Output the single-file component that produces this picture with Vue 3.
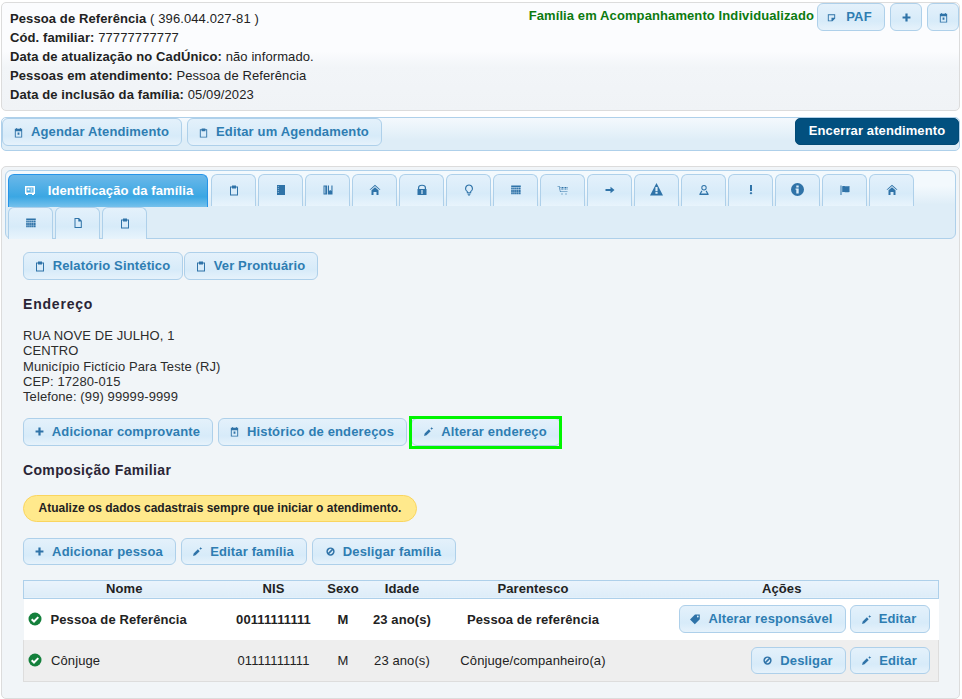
<script setup>
import { h } from 'vue'

let gridCells = 'M1.2 1.4h9.6v1.6H1.200z'
for (let r = 0; r < 3; r++) {
  for (let c = 0; c < 5; c++) {
    gridCells += ` M${(1.2 + c * 1.95).toFixed(2)} ${(3.5 + r * 2.4).toFixed(2)}h1.6v2h-1.6z`
  }
}

const icons = {
  clipboard: 'M2 2.5h2v-1h4v1h2v9H2z M3 3.5v7h6v-7H8v1H4v-1z',
  calendar: 'M2 2h1.5V1h1v1h3V1h1v1H10v9.5H2z M3 4.5v6h6v-6z M5 6h2v2.5H5z',
  plus: 'M4.8 1.700h2.400v3.100h3.100v2.400H7.200v3.100H4.800V7.200H1.700V4.800h3.100z',
  pencil: 'M1.200 10.800l.6-2.600 4.600-4.600 2 2-4.600 4.600z M9.500 1l.5 1.200 1.200.5-1.200.5-.5 1.200-.5-1.200-1.200-.5 1.200-.5z',
  ban: 'M6 1.500a4.500 4.500 0 1 1 0 9a4.500 4.500 0 1 1 0-9z M7.400 3.400A3 3 0 0 0 3.400 7.400z M8.600 4.600L4.600 8.600A3 3 0 0 0 8.600 4.600z',
  tag: 'M1 6.500L6 1.500h4.800v4.800l-5 5z M8.800 2.600a.9.9 0 1 0 0 1.800a.9.9 0 1 0 0-1.800z',
  note: 'M2 2.500h8v4.700l-3 3H2z M3 3.500v5.700h3V6.200h3V3.500z',
  card: 'M1 2h10v8h-1v1H8v-1H4v1H2v-1H1z M2.500 3.500v5h7v-5z M3.500 4.500h2v2h-2z M6.500 4.500h2v1h-2z M6.500 6.500h2v1h-2z',
  notebook: 'M2 1h8v10H2z M2.800 2v.8h.8V2z M2.800 4v.8h.8V4z M2.800 6v.8h.8V6z M2.800 8v.8h.8V8z',
  book: 'M1.500 1.500h3.700v9H1.500z M6 1.500h4.500v9H6z M7 1.500v5.500l1.200-1 1.200 1V1.500z M2.500 2.500v7h.8v-7z',
  home: 'M6 .8l5.500 5h-1.200L6 2 1.700 5.800H.5z M6 3.200l3.500 3.100v4.700h-2V8h-3v3h-2V6.300z',
  bag: 'M2 5V3.800a4 3 0 0 1 8 0V5h.5v6h-9V5z M3.200 5h5.600V3.800a2.800 2 0 0 0-5.600 0z M5.400 6v4h1.200V6z',
  bulb: 'M6 .5a4 4 0 0 1 2.200 7.300v1.400H3.800V7.800A4 4 0 0 1 6 .5z M6 1.500a3 3 0 0 0-1.200 5.700v1h2.400v-1A3 3 0 0 0 6 1.500z M4.500 9.700h3v.8h-3z M5 10.800h2v.7H5z',
  grid: gridCells,
  cart: 'M.5 2h2l1 5.500h7V8H3L2 2.600H.5z M3.500 3h1v1h-1z M5 3h1v1H5z M6.500 3h1v1h-1z M8 3h1v1H8z M9.500 3h1v1h-1z M3.700 4.500h1v1h-1z M5 4.500h1v1H5z M6.500 4.500h1v1h-1z M8 4.500h1v1H8z M9.500 4.500h1v1h-1z M4.500 9.500h1v1h-1z M8.500 9.500h1v1h-1z',
  arrow: 'M1.500 5h5V2.800L10.500 6l-4 3.200V7h-5z',
  warning: 'M6 0l6 11.500H0z M5 3.800v3.700h2V3.800z M5 8.300v1.700h2V8.300z',
  person: 'M6 1a2.700 2.700 0 1 1 0 5.400a2.700 2.700 0 1 1 0-5.400z M6 2a1.700 1.700 0 1 0 0 3.400a1.700 1.700 0 1 0 0-3.400z M3.400 6.600l1 .7L3 9.500h6L7.600 7.300l1-.7 2 3.400v1H1.400v-1z',
  bang: 'M5 1h2v6H5z M6 7.800l1.400 1.400L6 10.600 4.600 9.200z',
  info: 'M6 0a6 6 0 1 1 0 12a6 6 0 1 1 0-12z M4.900 2.200v1.900h2.200V2.200z M4.200 5.100v1.100h.7v3.600h2.200V5.100z',
  flag: 'M1.500 1.500h1v9.500h-1z M3.200 2.200c2-1 3.500.8 7.300-.2v6c-3.800 1-5.300-.8-7.300.2z',
  page: 'M2.500 1H7l2.800 2.800V11H2.500z M3.500 2v8h5.300V4.500H6.300V2z',
}

const Ico = (props) =>
  h('svg', { viewBox: '0 0 12 12', width: props.s || 11, height: props.s || 11 }, [
    h('path', { d: icons[props.n], 'fill-rule': 'evenodd', fill: 'currentColor' }),
  ])
Ico.props = ['n', 's']

const CheckIco = () =>
  h('svg', { viewBox: '0 0 14 14', width: 14, height: 14 }, [
    h('circle', { cx: 7, cy: 7, r: 6.5, fill: '#14803c' }),
    h('path', { d: 'M3.700 7.200l2.300 2.300 4.300-4.400', fill: 'none', stroke: '#fff', 'stroke-width': 2 }),
  ])

const tabs = ['clipboard','notebook','book','home','bag','bulb','grid','cart','arrow','warning','person','bang','info','flag','home','grid','page','clipboard']
const tabSize = { warning: 13, info: 13 }
</script>

<template>
  <div class="page">
    <section class="summary">
      <div class="info">
        <div><b>Pessoa de Referência</b> ( 396.044.027-81 )</div>
        <div><b>Cód. familiar:</b> 77777777777</div>
        <div><b>Data de atualização no CadÚnico:</b> não informado.</div>
        <div><b>Pessoas em atendimento:</b> Pessoa de Referência</div>
        <div><b>Data de inclusão da família:</b> 05/09/2023</div>
      </div>
      <div class="summary-actions">
        <b class="status">Família em Acompanhamento Individualizado</b>
        <button class="btn paf"><Ico n="note" /><span>PAF</span></button>
        <button class="btn square"><Ico n="plus" /></button>
        <button class="btn square"><Ico n="calendar" /></button>
      </div>
    </section>

    <section class="toolbar">
      <button class="btn agendar"><Ico n="calendar" /><span>Agendar Atendimento</span></button>
      <button class="btn editar-ag"><Ico n="clipboard" /><span>Editar um Agendamento</span></button>
      <button class="end">Encerrar atendimento</button>
    </section>

    <section class="panel">
      <nav class="tabbar">
        <a class="tab active"><Ico n="card" s="12" /><span>Identificação da família</span></a>
        <a v-for="(t, i) in tabs" :key="i" class="tab"><Ico :n="t" :s="tabSize[t] || 12" /></a>
      </nav>

      <div class="content">
        <div class="row tight">
          <button class="btn w160"><Ico n="clipboard" s="12" /><span>Relatório Sintético</span></button>
          <button class="btn w134"><Ico n="clipboard" s="12" /><span>Ver Prontuário</span></button>
        </div>

        <h2 class="h-end">Endereço</h2>
        <address>
          RUA NOVE DE JULHO, 1<br />
          CENTRO<br />
          Município Fictício Para Teste (RJ)<br />
          CEP: 17280-015<br />
          Telefone: (99) 99999-9999
        </address>

        <div class="row addr">
          <button class="btn w190"><Ico n="plus" /><span>Adicionar comprovante</span></button>
          <button class="btn w189"><Ico n="calendar" /><span>Histórico de endereços</span></button>
          <button class="btn w150 highlighted"><Ico n="pencil" /><span>Alterar endereço</span></button>
        </div>

        <h2 class="h-comp">Composição Familiar</h2>
        <p class="alert">Atualize os dados cadastrais sempre que iniciar o atendimento.</p>

        <div class="row fam">
          <button class="btn w153"><Ico n="plus" /><span>Adicionar pessoa</span></button>
          <button class="btn w126"><Ico n="pencil" /><span>Editar família</span></button>
          <button class="btn w144"><Ico n="ban" /><span>Desligar família</span></button>
        </div>

        <table>
          <colgroup>
            <col style="width: 201px" /><col style="width: 98px" /><col style="width: 41px" /><col style="width: 77px" /><col style="width: 185px" /><col />
          </colgroup>
          <thead>
            <tr><th>Nome</th><th>NIS</th><th>Sexo</th><th>Idade</th><th>Parentesco</th><th>Ações</th></tr>
          </thead>
          <tbody>
            <tr class="strong">
              <td class="name"><span class="name-in"><CheckIco /><span>Pessoa de Referência</span></span></td>
              <td>00111111111</td><td>M</td><td>23 ano(s)</td><td>Pessoa de referência</td>
              <td class="acts">
                <button class="btn w167"><Ico n="tag" s="12" /><span>Alterar responsável</span></button>
                <button class="btn w80"><Ico n="pencil" /><span>Editar</span></button>
              </td>
            </tr>
            <tr class="alt">
              <td class="name"><span class="name-in"><CheckIco /><span>Cônjuge</span></span></td>
              <td>01111111111</td><td>M</td><td>23 ano(s)</td><td>Cônjuge/companheiro(a)</td>
              <td class="acts">
                <button class="btn w95"><Ico n="ban" /><span>Desligar</span></button>
                <button class="btn w80"><Ico n="pencil" /><span>Editar</span></button>
              </td>
            </tr>
          </tbody>
        </table>
      </div>
    </section>
  </div>
</template>

<style>
html, body { margin: 0; background: #fff; }
</style>

<style scoped>
.page {
  width: 962px;
  height: 699px;
  box-sizing: border-box;
  padding: 2px 2px 0 1px;
  font: 13px/19px "Liberation Sans", Arial, sans-serif;
  color: #222;
  letter-spacing: .1px;
  overflow: hidden;
}
b, th { font-weight: 700; }
button { font-family: inherit; margin: 0; cursor: pointer; }

.summary {
  box-sizing: border-box;
  height: 109px;
  border: 1px solid #dcdcdc;
  border-radius: 5px;
  background: linear-gradient(#fbfcfe 0, #fbfcfe 45%, #f2f5f8 60%, #f0f3f6 100%);
  display: flex;
  justify-content: space-between;
  padding: 6px 0 0 8px;
}
.summary-actions { display: flex; align-items: flex-start; margin-top: -6px; }
.status { color: #0c7a10; margin-top: 3px; margin-right: 3px; letter-spacing: .1px; }

.btn {
  position: relative;
  box-sizing: border-box;
  height: 28px;
  display: inline-flex;
  align-items: center;
  justify-content: center;
  gap: 7px;
  padding: 0 2px 0 0;
  border: 1px solid #aed0ea;
  border-radius: 6px;
  background: linear-gradient(#e4f1fb 0, #d7ebf9 65%, #e6f2fb 100%);
  color: #2e7db2;
  font-size: 13px;
  font-weight: 700;
  letter-spacing: .15px;
  white-space: nowrap;
}
.btn span { padding-bottom: 2px; }
.addr .btn span, .fam .btn span, .alt .btn span { padding-bottom: 0; }
.btn svg { color: #2f73a8; flex: none; }

.paf { width: 68px; gap: 9px; padding-right: 4px; letter-spacing: .2px; }
.square { width: 32px; margin-left: 5px; padding: 0; }

.toolbar {
  box-sizing: border-box;
  height: 34px;
  margin-top: 6px;
  border: 1px solid #aed0ea;
  border-radius: 5px;
  background: linear-gradient(#f4f9fd 0, #deedf7 70%);
  display: flex;
  align-items: flex-start;
  gap: 5px;
}
.agendar { width: 180px; }
.editar-ag { width: 195px; }
.end {
  box-sizing: border-box;
  margin-left: auto;
  width: 164px;
  height: 27px;
  padding: 0 0 2px;
  border: 1px solid #024a75;
  border-radius: 5px;
  background: #02507f;
  color: #fff;
  font-size: 13px;
  font-weight: 700;
  letter-spacing: .1px;
}

.panel {
  box-sizing: border-box;
  height: 533px;
  margin-top: 15px;
  border: 1px solid #dcdcdc;
  border-radius: 5px;
  background: #f1f5f8;
  padding: 3px;
}
.tabbar {
  box-sizing: border-box;
  height: 69px;
  border: 1px solid #aed0ea;
  border-radius: 6px;
  background: linear-gradient(#f3f9fd 0, #f3f9fd 22%, #deedf7 50%);
  display: flex;
  flex-wrap: wrap;
  align-content: flex-start;
  gap: 1px 2px;
  padding: 3px 2px 0;
}
.tab {
  box-sizing: border-box;
  width: 45px;
  height: 32px;
  display: flex;
  align-items: center;
  justify-content: center;
  padding-bottom: 2px;
  border: 1px solid #aed0ea;
  border-bottom: 0;
  border-radius: 6px 6px 0 0;
  background: linear-gradient(#e4f1fb 0, #d7ebf9 60%, #e8f4fc 100%);
  color: #2f73a8;
}
.tab.active {
  width: 200px;
  height: 33px;
  margin-right: 1px;
  margin-bottom: -1px;
  gap: 12px;
  padding-left: 1px;
  border-color: #2694e8;
  background: linear-gradient(#6bb8e9 0, #3ba7e3 68%, #75c1ec 100%);
  color: #fff;
  font-size: 13px;
  font-weight: 700;
  letter-spacing: .1px;
}

.content { padding: 13px 18px 0; }
.row { display: flex; gap: 5px; }
.row.tight { gap: 1px; }
.w160 { width: 160px; } .w134 { width: 134px; }
.w190 { width: 190px; } .w189 { width: 189px; margin-right: -1px; }
.w150 { width: 150px; }
.w153 { width: 153px; height: 27px; } .w126 { width: 126px; height: 27px; } .w144 { width: 144px; height: 27px; }
.w167 { width: 167px; } .w80 { width: 80px; } .w95 { width: 95px; height: 27px; }
.alt .w80 { height: 27px; }

.highlighted::after {
  content: "";
  position: absolute;
  top: -3px;
  right: -2px;
  bottom: -4px;
  left: -3px;
  border: 3px solid #00f500;
  pointer-events: none;
}

h2 {
  margin: 0;
  font-size: 14px;
  line-height: 18px;
  font-weight: 700;
  color: #2a2536;
  letter-spacing: .35px;
}
.h-end { margin-top: 15px; letter-spacing: .8px; }
.h-comp { margin-top: 15px; }

address {
  margin: 15px 0 0;
  font-style: normal;
  font-size: 13px;
  line-height: 15.3px;
  letter-spacing: .1px;
  color: #2c2c2c;
}
.addr { margin-top: 13.5px; }

.alert {
  box-sizing: border-box;
  width: 394px;
  height: 27px;
  margin: 16px 0 0;
  display: flex;
  align-items: center;
  justify-content: center;
  border: 1px solid #fad55f;
  border-radius: 14px;
  background: #ffe98c;
  font-size: 12px;
  font-weight: 700;
  letter-spacing: 0;
}
.fam { margin-top: 16px; }

table {
  width: 916px;
  margin-top: 15px;
  border-collapse: collapse;
  table-layout: fixed;
  text-align: center;
  font-size: 13px;
}
th {
  height: 17px;
  padding: 0;
  border-top: 1px solid #aed0ea;
  border-bottom: 1px solid #aed0ea;
  background: linear-gradient(#eaf4fc, #ddecf8);
  line-height: 16px;
  letter-spacing: .1px;
}
th:first-child { border-left: 1px solid #aed0ea; }
th:last-child { border-right: 1px solid #aed0ea; }
td { height: 41px; padding: 0; background: #fff; }
.strong td { font-weight: 700; }
.alt td { background: #eee; font-weight: 400; border-bottom: 1px solid #ddd; }
.alt td:first-child { border-left: 1px solid #ddd; }
.alt td:last-child { border-right: 1px solid #ddd; }
.name { text-align: left; }
.name-in { display: flex; align-items: center; gap: 9px; padding-left: 4px; }
.acts { text-align: right; padding-right: 9px; }
.alt .acts { padding-right: 8px; }
.acts .btn { margin-left: 4px; vertical-align: middle; }
</style>
